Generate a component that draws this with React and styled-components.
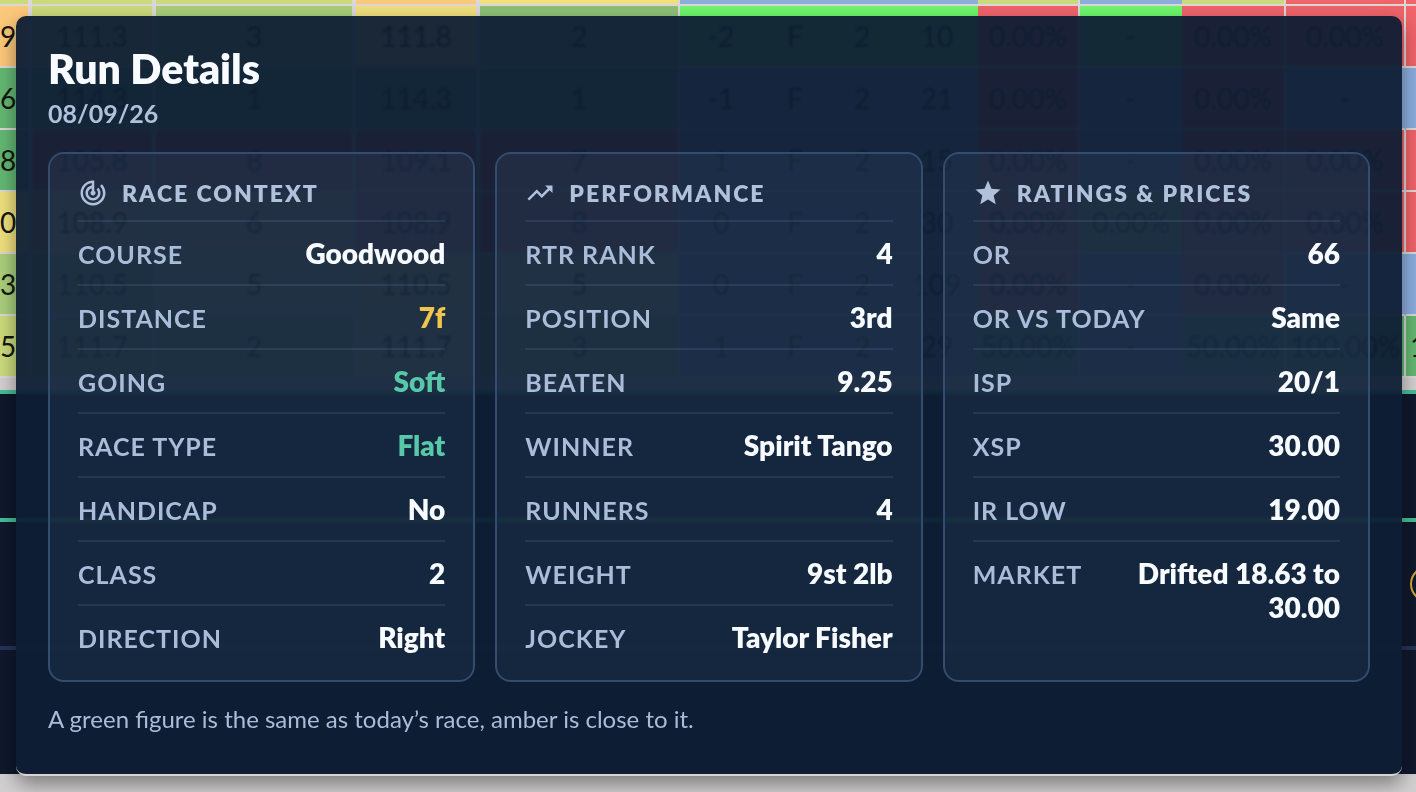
import React from 'react';
import styled, { createGlobalStyle } from 'styled-components';
import { MdStar, MdTrackChanges, MdTrendingUp } from 'react-icons/md';

const GlobalStyle = createGlobalStyle`
  * {
    box-sizing: border-box;
  }

  body {
    margin: 0;
    overflow: hidden;
    background: #d3d0d1;
    font-family: Lato, 'Open Sans', sans-serif;
  }
`;

const Page = styled.main`
  position: relative;
  min-height: 100vh;
  overflow: hidden;
`;

const RatingsTable = styled.table`
  width: 100%;
  table-layout: fixed;
  border-spacing: 0;
  color: #14170f;
  font-size: 28px;
  line-height: 34px;
`;

const Col = styled.col`
  width: ${props => (props.$width ? `${props.$width}px` : 'auto')};
`;

const Cell = styled.td`
  height: ${props => (props.$short ? 6 : 62)}px;
  padding: 0;
  overflow: hidden;
  border-bottom: 2px solid #dcd8d8;
  border-right: ${props => props.$gap}px solid
    ${props => (props.$joined ? props.$color : '#dcd8d8')};
  background: ${props => props.$color};
  text-align: ${props => props.$align || 'center'};
  white-space: nowrap;

  &:last-child {
    padding-left: 4px;
  }
`;

const Entries = styled.div`
  margin-top: 12px;
  border-top: 4px solid #48bd97;
  background: #0f182d;
`;

const Entry = styled.div`
  display: flex;
  align-items: center;
  justify-content: flex-end;
  height: ${props => (props.$last ? 124 : 128)}px;
  border-bottom: ${props => (props.$last ? 0 : 4)}px solid
    ${props => props.$line || 'transparent'};
`;

const Ring = styled.span`
  width: 36px;
  height: 36px;
  margin-right: -30px;
  flex: none;
  border: 2px solid #d9a536;
  border-radius: 50%;
`;

const Dialog = styled.section`
  position: absolute;
  top: 16px;
  left: 16px;
  right: 14px;
  padding: 32px 32px 38px;
  border-bottom: 2px solid #d8d4d4;
  border-radius: 10px;
  background: rgba(14, 30, 52, 0.95);
  background-clip: padding-box;
  backdrop-filter: blur(1px);
  box-shadow: 0 8px 20px rgba(0, 0, 0, 0.42);
`;

const Title = styled.h1`
  margin: 0;
  color: #f8fbff;
  font-size: 41px;
  font-weight: 800;
  line-height: 42px;
`;

const RunDate = styled.p`
  margin: 6px 0 22px;
  color: #b0c1dc;
  font-size: 25px;
  font-weight: 700;
  line-height: 34px;
`;

const Cards = styled.div`
  display: grid;
  grid-template-columns: repeat(3, minmax(0, 1fr));
  gap: 20px;
`;

const Card = styled.section`
  padding: 12px 28px;
  border: 2px solid #344c6d;
  border-radius: 16px;
  background: rgba(110, 140, 180, 0.09);
  background-clip: padding-box;
`;

const CardTitle = styled.h2`
  display: flex;
  align-items: center;
  gap: 14px;
  height: 56px;
  margin: 0;
  border-bottom: 2px solid rgba(120, 150, 190, 0.16);
  color: #b0c1dc;
  font-size: 23px;
  font-weight: 800;
  letter-spacing: 2px;
  text-transform: uppercase;

  svg {
    flex: none;
    width: 30px;
    height: 30px;
  }
`;

const Facts = styled.dl`
  margin: 0;
`;

const Fact = styled.div`
  display: flex;
  align-items: flex-start;
  justify-content: space-between;
  gap: 24px;
  padding: 14px 0 12px;
  border-bottom: 2px solid rgba(120, 150, 190, 0.16);

  &:last-child {
    border-bottom: 0;
  }
`;

const Label = styled.dt`
  flex: none;
  color: #a9bcd9;
  font-size: 25px;
  font-weight: 700;
  line-height: 36px;
  letter-spacing: 1px;
  text-transform: uppercase;
`;

const tones = {
  same: '#57c9a8',
  close: '#f0c54c',
};

const Value = styled.dd`
  margin: 0;
  color: ${props => tones[props.$tone] || '#f8fbff'};
  font-size: 28px;
  font-weight: 800;
  line-height: 34px;
  text-align: right;
`;

const Note = styled.p`
  margin: 20px 0 0;
  color: #a9bcd9;
  font-size: 24px;
  line-height: 34px;
`;

const RED = '#f0646a';
const BLUE = '#8baedd';
const LIME = '#6ff66c';
const GREEN = '#64b873';
const LEAF = '#a9cf7b';
const OLIVE = '#cbdb7c';
const YELLOW = '#f0e07e';
const ORANGE = '#fcc87a';

const columns = [
  { width: 32, gap: 4 },
  { width: 124, gap: 4 },
  { width: 200, gap: 4 },
  { width: 124, gap: 4 },
  { width: 200, gap: 2 },
  { width: 82, gap: 0 },
  { width: 66, gap: 0 },
  { width: 68, gap: 0 },
  { width: 82, gap: 0 },
  { width: 102, gap: 2 },
  { width: 102, gap: 0 },
  { width: 104, gap: 2 },
  { width: 120, gap: 2 },
  { gap: 0 },
];

const rows = [
  {
    values: ['', '', '', '', '', '', '', '', '', '', '', '', '', ''],
    colors: [OLIVE, OLIVE, OLIVE, ORANGE, YELLOW, BLUE, BLUE, BLUE, BLUE, OLIVE, BLUE, OLIVE, RED, RED],
  },
  {
    values: ['9', '111.3', '3', '111.8', '2', '-2', 'F', '2', '10', '0.00%', '-', '0.00%', '0.00%', ''],
    colors: [ORANGE, OLIVE, LEAF, YELLOW, '#8fc178', LIME, LIME, LIME, LIME, RED, LIME, RED, RED, RED],
  },
  {
    values: ['6', '114.3', '1', '114.3', '1', '-1', 'F', '2', '21', '0.00%', '-', '0.00%', '-', ''],
    colors: [GREEN, GREEN, GREEN, GREEN, GREEN, BLUE, BLUE, BLUE, BLUE, RED, BLUE, RED, BLUE, BLUE],
  },
  {
    values: ['8', '105.8', '8', '109.1', '7', '1', 'F', '2', '15', '0.00%', '-', '0.00%', '0.00%', ''],
    colors: [GREEN, RED, RED, RED, RED, BLUE, BLUE, BLUE, BLUE, RED, BLUE, RED, RED, RED],
  },
  {
    values: ['0', '108.9', '6', '108.9', '8', '0', 'F', '2', '30', '0.00%', '0.00%', '0.00%', '0.00%', ''],
    colors: [YELLOW, ORANGE, ORANGE, RED, RED, BLUE, BLUE, BLUE, BLUE, RED, LEAF, RED, RED, RED],
  },
  {
    values: ['3', '110.5', '5', '110.5', '5', '0', 'F', '2', '109', '0.00%', '-', '0.00%', '-', ''],
    colors: [LEAF, LEAF, OLIVE, YELLOW, OLIVE, BLUE, BLUE, BLUE, BLUE, RED, BLUE, RED, BLUE, BLUE],
  },
  {
    values: ['5', '111.7', '2', '111.7', '3', '1', 'F', '2', '29', '50.00%', '-', '50.00%', '100.00%', '1'],
    colors: [OLIVE, LEAF, LEAF, OLIVE, LEAF, BLUE, BLUE, BLUE, BLUE, GREEN, BLUE, GREEN, GREEN, GREEN],
  },
];

const cards = [
  {
    title: 'Race Context',
    icon: MdTrackChanges,
    facts: [
      { label: 'Course', value: 'Goodwood' },
      { label: 'Distance', value: '7f', tone: 'close' },
      { label: 'Going', value: 'Soft', tone: 'same' },
      { label: 'Race Type', value: 'Flat', tone: 'same' },
      { label: 'Handicap', value: 'No' },
      { label: 'Class', value: '2' },
      { label: 'Direction', value: 'Right' },
    ],
  },
  {
    title: 'Performance',
    icon: MdTrendingUp,
    facts: [
      { label: 'RTR Rank', value: '4' },
      { label: 'Position', value: '3rd' },
      { label: 'Beaten', value: '9.25' },
      { label: 'Winner', value: 'Spirit Tango' },
      { label: 'Runners', value: '4' },
      { label: 'Weight', value: '9st 2lb' },
      { label: 'Jockey', value: 'Taylor Fisher' },
    ],
  },
  {
    title: 'Ratings & Prices',
    icon: MdStar,
    facts: [
      { label: 'OR', value: '66' },
      { label: 'OR vs Today', value: 'Same' },
      { label: 'ISP', value: '20/1' },
      { label: 'XSP', value: '30.00' },
      { label: 'IR Low', value: '19.00' },
      { label: 'Market', value: 'Drifted 18.63 to 30.00' },
    ],
  },
];

const RunTable = () => (
  <RatingsTable>
    <colgroup>
      {columns.map((column, i) => (
        <Col key={i} $width={column.width} />
      ))}
    </colgroup>
    <tbody>
      {rows.map((row, r) => (
        <tr key={r}>
          {row.values.map((value, i) => (
            <Cell
              key={i}
              $short={r === 0}
              $color={row.colors[i]}
              $gap={columns[i].gap}
              $joined={row.colors[i] === BLUE && row.colors[i + 1] === BLUE}
              $align={i === 0 || i === 13 ? 'left' : 'center'}
            >
              {value}
            </Cell>
          ))}
        </tr>
      ))}
    </tbody>
  </RatingsTable>
);

const DetailCard = ({ title, icon: Icon, facts }) => (
  <Card>
    <CardTitle>
      <Icon aria-hidden="true" />
      {title}
    </CardTitle>
    <Facts>
      {facts.map(fact => (
        <Fact key={fact.label}>
          <Label>{fact.label}</Label>
          <Value $tone={fact.tone}>{fact.value}</Value>
        </Fact>
      ))}
    </Facts>
  </Card>
);

const App = () => (
  <Page>
    <GlobalStyle />
    <RunTable />
    <Entries>
      <Entry $line="#48bd97" />
      <Entry $line="#253557">
        <Ring />
      </Entry>
      <Entry $last />
    </Entries>

    <Dialog role="dialog" aria-labelledby="run-details-title">
      <Title id="run-details-title">Run Details</Title>
      <RunDate>08/09/26</RunDate>
      <Cards>
        {cards.map(card => (
          <DetailCard key={card.title} {...card} />
        ))}
      </Cards>
      <Note>A green figure is the same as today’s race, amber is close to it.</Note>
    </Dialog>
  </Page>
);

export default App;
